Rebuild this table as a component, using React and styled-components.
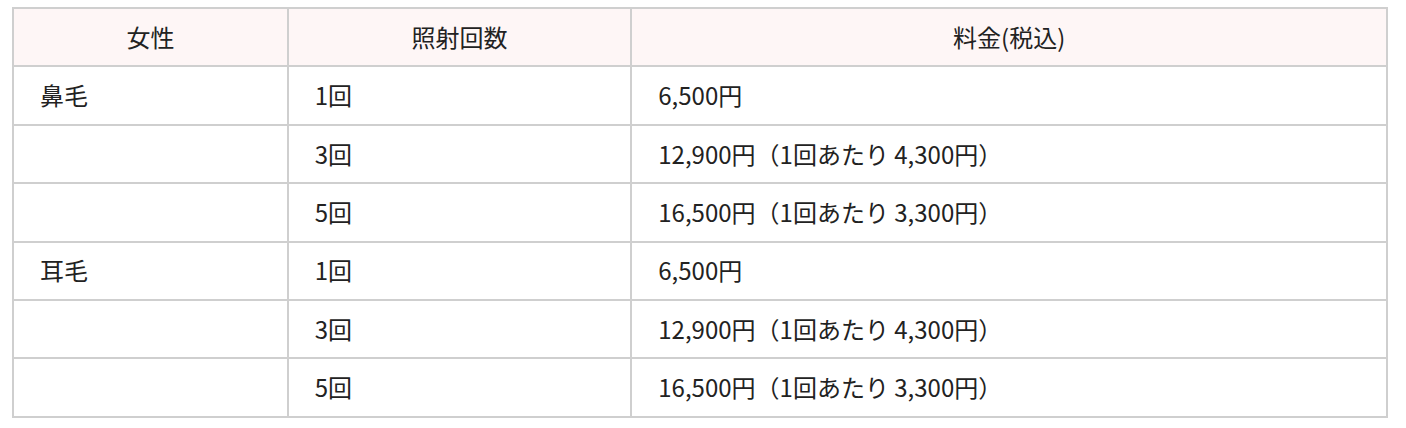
import React from "react";
import styled, { createGlobalStyle } from "styled-components";

const Global = createGlobalStyle`
  body {
    margin: 0;
    background: #ffffff;
    font-family: "Noto Sans CJK JP", "Noto Sans", sans-serif;
    color: #222222;
  }
`;

const Wrap = styled.div`
  padding: 7px 18px 0 12px;
`;

const Table = styled.table`
  width: 100%;
  border-collapse: collapse;
  table-layout: fixed;
  border: 2px solid #cfcfcf;
`;

const Col = styled.col`
  width: ${(p) => p.$w};
`;

const Th = styled.th`
  background: #fef6f6;
  border: 2px solid #cfcfcf;
  height: 58.4px;
  padding: 0 26px;
  font-size: 24px;
  line-height: 1.2;
  font-weight: 400;
  text-align: center;
  box-sizing: border-box;
`;

const Td = styled.td`
  border: 2px solid #cfcfcf;
  height: 58.4px;
  padding: 0 26px;
  font-size: 24px;
  line-height: 1.2;
  font-weight: 400;
  text-align: left;
  box-sizing: border-box;
`;

const rows = [
  ["鼻毛", "1回", "6,500円"],
  ["", "3回", "12,900円（1回あたり 4,300円）"],
  ["", "5回", "16,500円（1回あたり 3,300円）"],
  ["耳毛", "1回", "6,500円"],
  ["", "3回", "12,900円（1回あたり 4,300円）"],
  ["", "5回", "16,500円（1回あたり 3,300円）"],
];

export default function App() {
  return (
    <>
      <Global />
      <Wrap>
        <Table>
          <colgroup>
            <Col $w="20%" />
            <Col $w="25%" />
            <Col $w="55%" />
          </colgroup>
          <thead>
            <tr>
              <Th>女性</Th>
              <Th>照射回数</Th>
              <Th>料金(税込)</Th>
            </tr>
          </thead>
          <tbody>
            {rows.map((r, i) => (
              <tr key={i}>
                {r.map((c, j) => (
                  <Td key={j}>{c}</Td>
                ))}
              </tr>
            ))}
          </tbody>
        </Table>
      </Wrap>
    </>
  );
}
